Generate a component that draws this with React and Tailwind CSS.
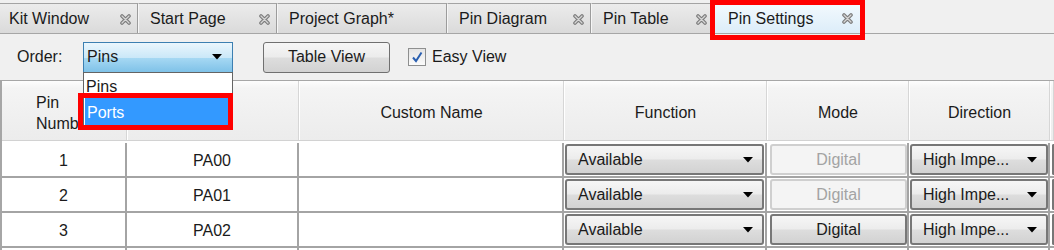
import React from 'react';

const btnBg = 'bg-[linear-gradient(#f6f6f6,#ececec_48%,#dddddd_52%,#d2d2d2)]';

function CloseIcon() {
  return (
    <svg width="11" height="11" viewBox="0 0 11 11" className="shrink-0">
      <path d="M2 2L9 9M9 2L2 9" stroke="#7b7b7b" strokeWidth="3.6" strokeLinecap="round" />
      <path d="M2 2L9 9M9 2L2 9" stroke="#d6d6d6" strokeWidth="1.3" strokeLinecap="round" />
    </svg>
  );
}

function Arrow() {
  return (
    <svg width="10" height="6" viewBox="0 0 10 6" className="shrink-0">
      <polygon points="0,0 10,0 5,5.5" fill="#000" />
    </svg>
  );
}

function Tab({ label, width, closable = true, first = false }) {
  return (
    <div
      className={`flex h-[30px] items-center justify-between border-t border-r border-t-[#a4a4a4] border-r-[#9c9c9c] bg-[linear-gradient(#ececec,#dadada)] pr-[6px] pt-[1px] ${first ? 'pl-[9px]' : 'border-l border-l-[#f6f6f6] pl-[11px]'} ${width}`}
    >
      <span>{label}</span>
      {closable && <CloseIcon />}
    </div>
  );
}

function Combo({ text, className = '' }) {
  return (
    <div
      className={`flex h-[31px] items-center justify-between rounded-[3px] border-2 border-[#777777] ${btnBg} pl-[11px] pr-[9px] ${className}`}
    >
      <span>{text}</span>
      <Arrow />
    </div>
  );
}

const rows = [
  { n: 1, name: 'PA00', mode: false },
  { n: 2, name: 'PA01', mode: false },
  { n: 3, name: 'PA02', mode: true },
];

const cols = 'grid grid-cols-[125px_172px_265px_203px_142px_141px_1fr]';
const line = 'border-r-2 border-[#a4a4a4]';

export default function App() {
  return (
    <div className="relative h-[250px] w-[1054px] overflow-hidden bg-[#f0f0f0] font-['Liberation_Sans',Arial,sans-serif] text-[16px] text-[#1b1b1b]">
      {/* Tab strip */}
      <div className="flex h-[34px] items-end border-b border-[#a6a6a6]">
        <Tab label="Kit Window" width="w-[138px]" first />
        <Tab label="Start Page" width="w-[139px]" />
        <Tab label="Project Graph*" width="w-[170px]" closable={false} />
        <Tab label="Pin Diagram" width="w-[144px]" />
        <Tab label="Pin Table" width="w-[123px]" />
        <div className="flex h-[32px] w-[148px] items-center justify-between border-x border-t border-[#9cb6c8] bg-[linear-gradient(#f4fafe,#dcedf9)] pl-[13px] pr-[8px] pt-[2px]">
          <span>Pin Settings</span>
          <CloseIcon />
        </div>
      </div>

      {/* Toolbar */}
      <div className="flex h-[46px] items-center">
        <span className="ml-[17px] w-[66px]">Order:</span>
        <div className="flex h-[31px] w-[150px] items-center justify-between border border-[#3c7fb1] bg-[linear-gradient(#eaf6fd,#cbe8f8_50%,#a6d8f3_52%,#7fc2e8)] pl-[3px] pr-[10px]">
          <span>Pins</span>
          <Arrow />
        </div>
        <div className={`ml-[30px] flex h-[31px] w-[127px] items-center justify-center rounded-[3px] border border-[#707070] ${btnBg}`}>
          Table View
        </div>
        <div className="ml-[18px] flex h-[18px] w-[18px] items-center justify-center border border-[#8e8f8f] bg-[linear-gradient(#e4e4e4,#fbfbfb)]">
          <svg width="12" height="12" viewBox="0 0 12 12">
            <path d="M2 6.5L5 10L10.5 1.5" stroke="#2a5fb0" strokeWidth="2" fill="none" />
          </svg>
        </div>
        <span className="ml-[6px]">Easy View</span>
      </div>

      {/* Table */}
      <div className="border-l-2 border-t border-[#a6a6a6] bg-white">
        <div className={`${cols} h-[60px] border-b border-[#d2d2d2] bg-[linear-gradient(#fdfdfd,#f4f4f4_12%,#ececec)]`}>
          <div className="flex flex-col justify-center border-r border-[#d6d6d6] pl-[34px] pt-[5px] leading-[21px]">
            <span>Pin</span>
            <span>Number</span>
          </div>
          <div className="border-r border-l border-r-[#d6d6d6] border-l-white" />
          {['Custom Name', 'Function', 'Mode', 'Direction', ''].map((h, i) => (
            <div key={i} className="flex items-center justify-center border-r border-l border-r-[#d6d6d6] border-l-white pt-[4px]">
              {h}
            </div>
          ))}
        </div>
        {rows.map((r, i) => (
          <div key={r.n} className={`${cols} border-b-2 border-[#a4a4a4] ${i === 0 ? 'h-[37px] pt-[2px]' : 'h-[35px]'}`}>
            <div className={`flex items-center justify-center pt-[2px] ${line}`}>{r.n}</div>
            <div className={`flex items-center justify-center pt-[2px] ${line}`}>{r.name}</div>
            <div className={line} />
            <div className={`flex items-center pl-px pr-[1px] ${line}`}>
              <Combo text="Available" className="w-full" />
            </div>
            <div className={`flex items-center pl-[3px] ${line}`}>
              {r.mode ? (
                <div className={`flex h-[31px] w-full items-center justify-center rounded-[3px] border-2 border-[#777777] ${btnBg}`}>
                  Digital
                </div>
              ) : (
                <div className="flex h-[31px] w-full items-center justify-center rounded-[3px] border-2 border-[#cfcfcf] bg-[#f4f4f4] text-[#a3a3a3]">
                  Digital
                </div>
              )}
            </div>
            <div className={`flex items-center pl-px ${line}`}>
              <Combo text="High Impe..." className="w-full pl-[9px] pr-[7px]" />
            </div>
            <div className="flex items-center pl-[2px]">
              <div className="h-[31px] w-full rounded-l-[3px] border-2 border-r-0 border-[#777777] bg-[#e2e2e2]" />
            </div>
          </div>
        ))}
        {/* next row, only its top edge shows */}
        <div className={`${cols} h-[35px]`}>
          <div className={line} />
          <div className={line} />
          <div className={line} />
          <div className={`pl-px pr-[1px] pt-[2px] ${line}`}>
            <div className="h-[31px] rounded-[3px] border-2 border-[#777777] bg-[#f4f4f4]" />
          </div>
          <div className={`pl-[3px] pt-[2px] ${line}`}>
            <div className="h-[31px] rounded-[3px] border-2 border-[#777777] bg-[#f4f4f4]" />
          </div>
          <div className={`pl-px pt-[2px] ${line}`}>
            <div className="h-[31px] rounded-[3px] border-2 border-[#777777] bg-[#f4f4f4]" />
          </div>
          <div />
        </div>
      </div>

      {/* Open dropdown list */}
      <div className="absolute left-[83px] top-[72px] h-[57px] w-[150px] border border-[#646464] bg-white">
        <div className="flex h-[24px] items-center pl-[2px] pt-[3px]">Pins</div>
        <div className="mx-px flex h-[28px] items-center bg-[#3399ff] pl-[2px] pt-[3px] text-white">Ports</div>
      </div>

      {/* Red annotation boxes */}
      <div className="absolute left-[710px] top-0 h-[40px] w-[155px] border-[5px] border-[#ff0000]" />
      <div className="absolute left-[78px] top-[93px] h-[37px] w-[155px] border-[5px] border-[#ff0000]" />
    </div>
  );
}
